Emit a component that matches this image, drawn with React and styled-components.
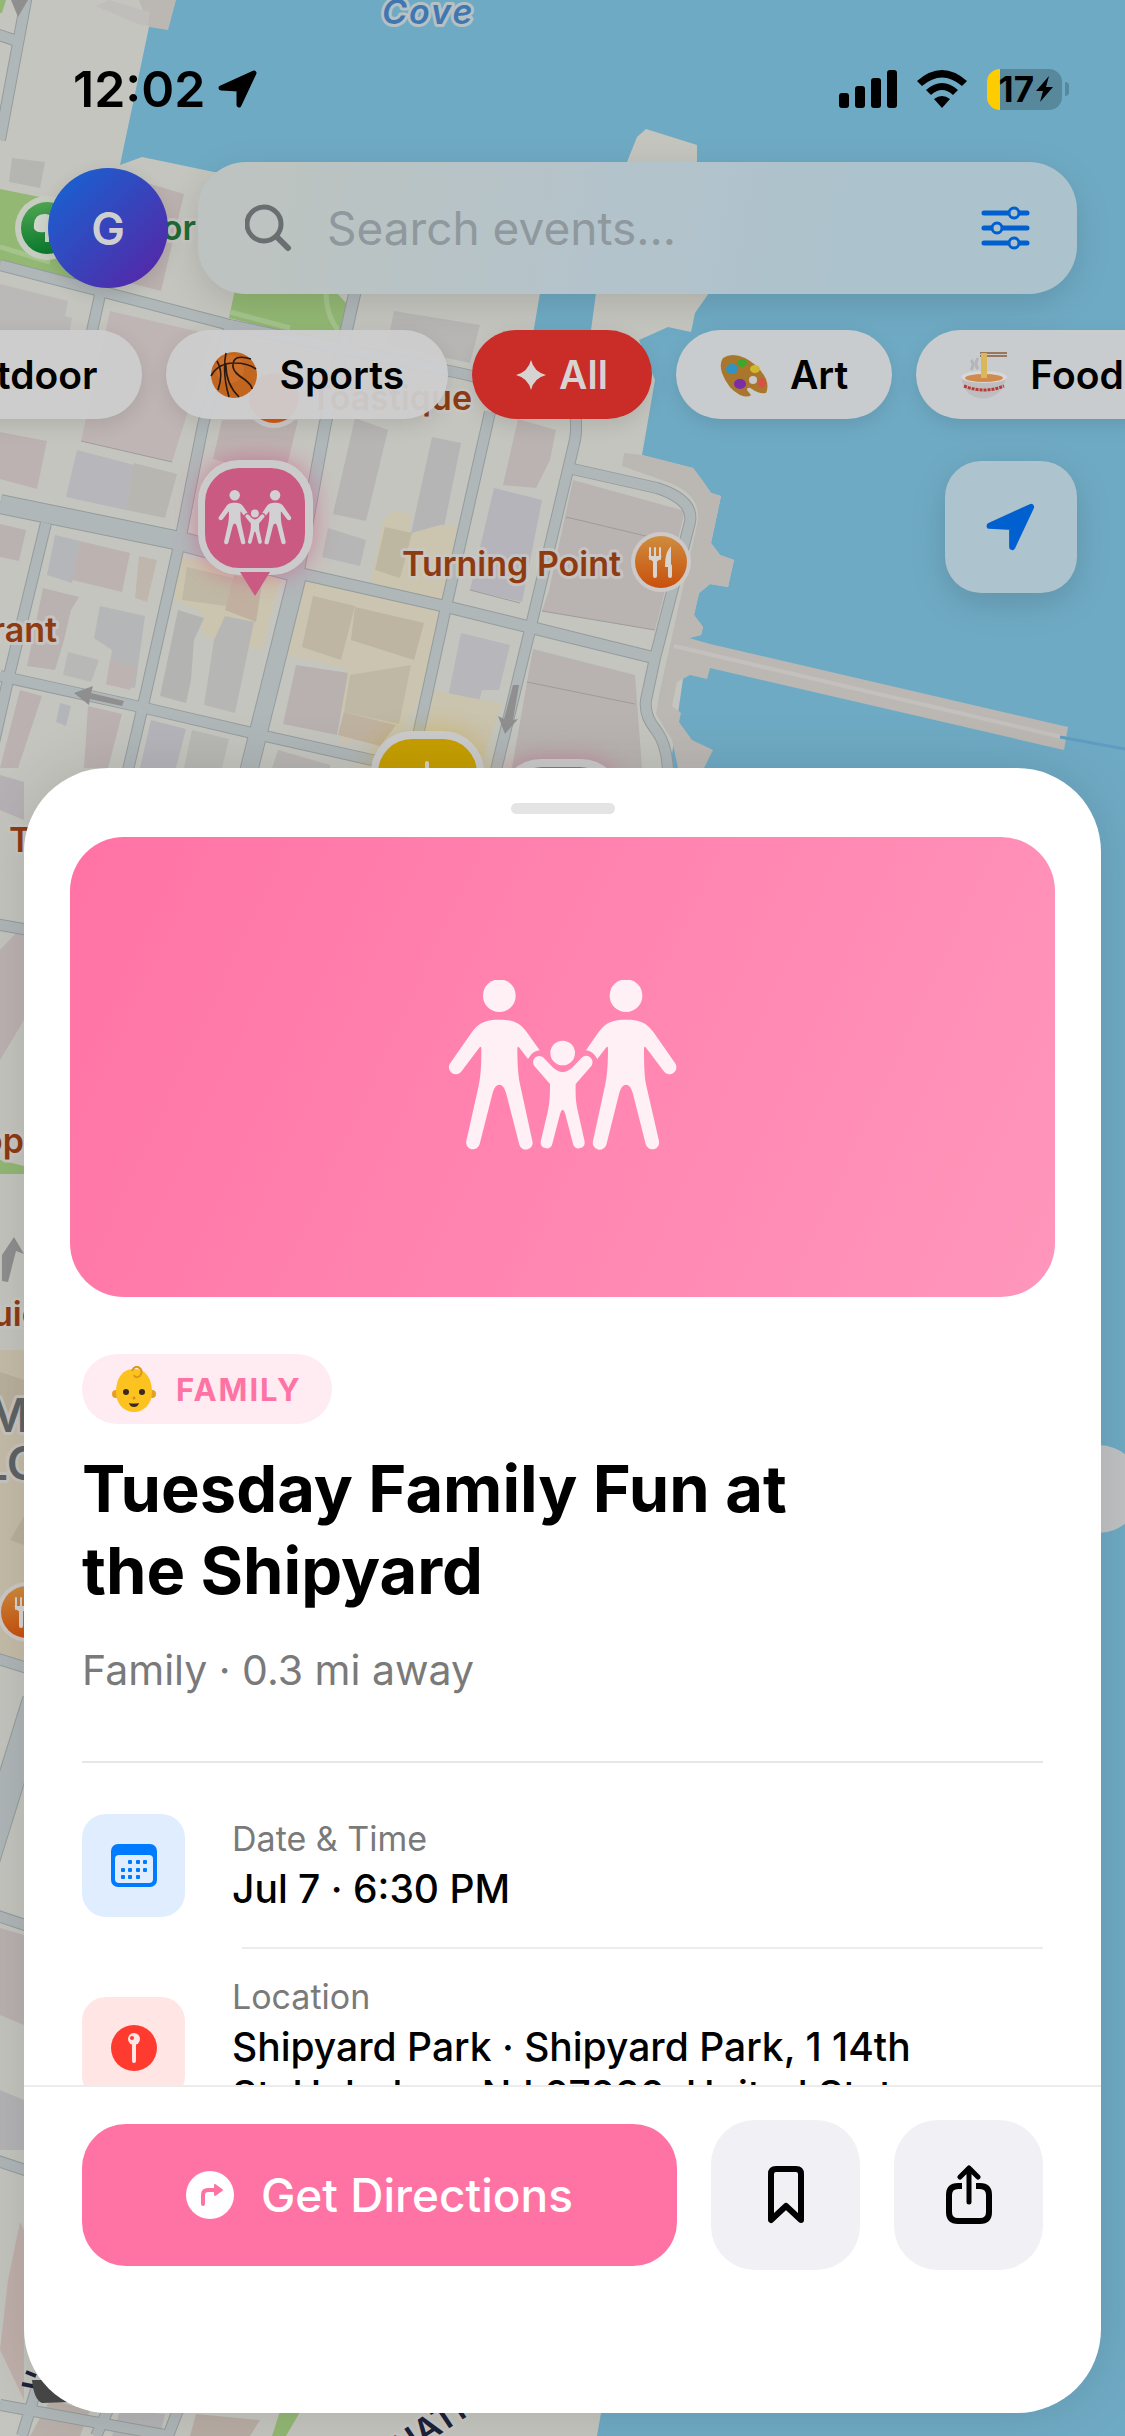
import React from "react";
import styled, { createGlobalStyle } from "styled-components";

const ink = "#000000";
const pink = "#ff73a4";
const blue = "#0060d0";

const GlobalStyle = createGlobalStyle`
  * {
    box-sizing: border-box;
  }

  body {
    margin: 0;
    background: #6faac4;
    font-family: Inter, "Liberation Sans", sans-serif;
    color: ${ink};
  }

  button,
  input {
    font: inherit;
    color: inherit;
    border: none;
    padding: 0;
    margin: 0;
  }
`;

//* Map data
const buildings = [
  { fill: "#c0bebb", points: "109,0 150,12 148,26 138,24 96,6" },
  { fill: "#b5b6b2", points: "12,158 45,162 40,188 9,182" },
  { fill: "#bbb9b8", points: "0,284 68,301 65,316 72,318 70,330 0,330" },
  { fill: "#bbb2b0", points: "144,182 184,194 161,291 110,278" },
  { fill: "#bfb5b5", points: "110,311 212,335 172,462 81,441" },
  { fill: "#bcb2b1", points: "0,432 47,441 37,489 0,479" },
  { fill: "#b6b6bb", points: "77,450 134,465 126,510 66,497" },
  { fill: "#b8b6b1", points: "134,463 177,474 165,518 126,510" },
  { fill: "#bcb2b0", points: "222,420 298,420 284,478 213,459" },
  { fill: "#b7b6b5", points: "394,311 480,325 470,363 387,345" },
  { fill: "#b6b5b4", points: "355,418 388,430 366,521 333,514" },
  { fill: "#b5b5b6", points: "432,437 461,443 441,542 411,533" },
  { fill: "#bab3b1", points: "518,419 556,430 550,460 536,488 503,485" },
  { fill: "#b6b6b6", points: "328,528 366,540 360,566 322,557" },
  { fill: "#b5b4ba", points: "494,488 542,500 522,602 470,590" },
  { fill: "#b9b4b2", points: "573,480 685,511 655,630 542,611 549,590" },
  { fill: "#bab2b1", points: "0,524 26,530 19,561 0,557" },
  { fill: "#b4b6ba", points: "55,535 80,541 72,583 47,575" },
  { fill: "#bcb3b1", points: "80,541 130,553 122,592 72,580" },
  { fill: "#bfb7ae", points: "139,556 157,560 147,602 135,598" },
  { fill: "#bab2b1", points: "43,588 79,597 71,610 64,640 55,670 27,666" },
  { fill: "#b5b6b8", points: "100,606 145,616 135,688 107,685 112,650 94,638" },
  { fill: "#b8b8b6", points: "68,652 99,660 91,682 63,675" },
  { fill: "#bdb3b1", points: "110,660 137,668 130,690 106,684" },
  { fill: "#cbc4ae", points: "181,557 281,578 262,650 203,636 202,612 174,600" },
  { fill: "#bfb8a4", points: "187,567 234,578 226,606 182,600" },
  { fill: "#c1b0a0", points: "234,575 262,583 256,622 225,610" },
  { fill: "#b3b4b2", points: "178,610 204,618 194,640 191,680 186,703 160,696" },
  { fill: "#b6b6b4", points: "225,616 254,622 235,713 204,705 214,640" },
  { fill: "#cbc4b0", points: "302,580 440,611 428,690 400,728 340,745 345,668 287,655" },
  { fill: "#beb5a3", points: "313,596 355,606 341,660 302,647" },
  { fill: "#bdb4a2", points: "355,607 424,623 414,660 351,640" },
  { fill: "#b9b1b0", points: "296,665 348,673 337,735 283,724" },
  { fill: "#beb8a5", points: "350,675 411,665 399,724 344,712" },
  { fill: "#c0b2a0", points: "344,712 396,725 380,746 338,735" },
  { fill: "#cbc4ae", points: "393,511 412,514 408,534 440,525 457,525 444,601 371,582 383,520" },
  { fill: "#bdb6a1", points: "385,527 412,533 400,578 375,570" },
  { fill: "#b6b6bb", points: "461,633 510,645 499,690 482,690 478,705 448,697" },
  { fill: "#cac3ad", points: "433,690 502,704 480,768 422,768" },
  { fill: "#b8b3b0", points: "533,649 635,675 642,768 512,768 527,682" },
  { fill: "#bab1b0", points: "20,690 42,696 18,768 0,768" },
  { fill: "#b4b5ba", points: "60,703 71,706 66,726 56,722" },
  { fill: "#bab1b0", points: "88,706 122,714 108,768 84,768" },
  { fill: "#b4b4ba", points: "151,720 186,729 176,768 140,768" },
  { fill: "#b8b8b5", points: "192,730 229,739 222,768 184,768" },
  { fill: "#b8b5b3", points: "278,750 330,765 330,768 272,768" },
  { fill: "#b6b1b4", points: "0,775 24,782 24,820 0,810" },
  { fill: "#bcb2b1", points: "0,950 24,925 24,1020 0,1060" },
  { fill: "#c5bda8", points: "0,1350 24,1350 24,1660 0,1660" },
  { fill: "#bab09d", points: "0,1372 24,1380 24,1420 0,1412" },
  { fill: "#bab09d", points: "10,1540 24,1516 24,1545" },
  { fill: "#b9b2b1", points: "0,1928 24,1935 24,2025 0,2015" },
  { fill: "#b4b4b6", points: "0,2090 24,2100 24,2150 0,2150" },
  { fill: "#c0b0ac", points: "20,2222 24,2230 24,2400 0,2350 8,2280" },
  { fill: "#bab0aa", points: "50,2400 90,2410 80,2436 30,2436" },
  { fill: "#b4b4b6", points: "120,2410 165,2414 160,2436 112,2436" },
  { fill: "#b9ada4", points: "196,2414 260,2420 250,2436 190,2436" },
];

const streets = [
  { width: 18, d: "M0 504L180 541L298 573" },
  { width: 11, d: "M298 573L448 607L655 658" },
  { width: 10, d: "M0 676L145 708L256 734L390 764" },
  { width: 10, d: "M0 265L100 291L230 325L459 373L575 400" },
  { width: 10, d: "M46 523L8 680L-10 760" },
  { width: 10, d: "M100 295L90 340" },
  { width: 10, d: "M230 325L203 425L180 541L142 710L128 770" },
  { width: 17, d: "M298 573L249 770" },
  { width: 11, d: "M355 292L325 425L298 573" },
  { width: 10, d: "M490 412L446 607L417 740" },
  { width: 10, d: "M573 400Q578 425 575 440L530 630L496 770" },
  { width: 10, d: "M568 468L657 488Q694 500 690 522L655 658L646 700Q644 716 656 730Q668 746 668 775" },
  { width: 10, d: "M27 -5L0 140M-4 34L20 42" },
  { width: 10, d: "M-5 924L40 932M-5 1658L40 1672M-5 1915L40 1930M-5 2160L40 2175" },
  { width: 26, d: "M-20 1880L36 1700" },
  { width: 10, d: "M0 2405L170 2436M36 2390L22 2436M108 2410L96 2436M178 2410L168 2436" },
];

function FamilyShape() {
  return (
    <>
      {[297, 677].map((x) => (
        <circle key={x} cx={x} cy="167" r="49" />
      ))}
      <path d="M297 239C335 239 358 246 379 276L418 331Q396 333 383 357L356 322Q351 317 351 326C351 380 354 410 361 442L396 603A20 20 0 0 1 357 614L317 458Q310 434 297 434Q284 434 277 458L238 612A20 20 0 0 1 198 603L234 442C241 410 243 380 243 326Q243 317 238 322L182 396A21 21 0 0 1 148 372L215 276C236 246 259 239 297 239Z" />
      <path d="M677 239C715 239 738 246 759 276L826 372A21 21 0 0 1 792 396L736 322Q731 317 731 326C731 380 732 410 739 442L776 603A20 20 0 0 1 736 612L697 458Q690 434 677 434Q664 434 657 458L618 614A20 20 0 0 1 578 603L613 442C620 410 623 380 623 326Q623 317 618 322L591 357Q578 333 557 331L595 276C616 246 639 239 677 239Z" />
      <circle cx="487" cy="339" r="37" />
      <path d="M430 353L457 382Q487 410 517 382L544 353A18 18 0 0 1 571 380L526 432C525 470 527 490 533 516L553 605A18 18 0 0 1 519 615L497 530Q492 509 487 509Q482 509 477 530L455 615A18 18 0 0 1 421 605L442 516C448 490 449 470 449 432L404 380A18 18 0 0 1 430 353Z" />
    </>
  );
}

function ForkPin({ x, y }) {
  return (
    <g transform={`translate(${x} ${y})`}>
      <circle r="30" fill="#cdc9c8" />
      <circle r="26" fill="url(#orange)" />
      <g fill="none" stroke="#d8d4d2" strokeLinecap="round">
        <path d="M-11 -14V-3M-6 -14V-3M-1 -14V-3" strokeWidth="2" />
        <path d="M-11 -5Q-6 3 -1 -5Z" fill="#d8d4d2" strokeWidth="2" />
        <path d="M-6 0V14" strokeWidth="4" />
        <path d="M9 -13Q5 -8 5 4H9Z" fill="#d8d4d2" strokeWidth="2" />
        <path d="M9 4V14" strokeWidth="4" />
      </g>
    </g>
  );
}

function CityMap() {
  return (
    <MapDrawing viewBox="0 0 1125 2436" preserveAspectRatio="xMinYMin slice" aria-hidden="true">
      <defs>
        <linearGradient id="orange" x2="0" y2="1">
          <stop stopColor="#cf8c3e" />
          <stop offset="1" stopColor="#c9500c" />
        </linearGradient>
        <linearGradient id="green" x2="0" y2="1">
          <stop stopColor="#4ea653" />
          <stop offset="1" stopColor="#0a7a2d" />
        </linearGradient>
        <filter id="glow" x="-50%" y="-50%" width="200%" height="200%">
          <feGaussianBlur stdDeviation="12" />
        </filter>
      </defs>
      <rect width="1125" height="2436" fill="#6faac4" />
      <path
        fill="#c5c5bf"
        d="M0 0H149V27L120 165L142 157L214 172L540 180V293L532 340L589 345L596 293L600 230L627 162L637 137L646 129L697 145V162L709 293L695 313L691 332L668 327L639 340L655 380L642 455L693 468L702 480L711 493L721 496L711 543L720 555L734 560L728 587L710 584L699 593L694 615L703 627L701 635L689 638L670 768L601 2413L597 2436H0Z"
      />
      <path
        fill="#bbb8b4"
        d="M139 0H176L168 30L149 27ZM624 453L642 455L693 468L702 480L711 493L721 496L711 543L720 555L734 560L728 587L710 584L699 593L694 615L703 627L701 635L689 638L710 644L1068 727L1064 750L710 668L707 679L690 675L677 682L672 706L681 713L679 722L692 740L713 750L704 768H678L672 740L656 714L660 690L698 520Q700 495 670 483L622 466Z"
      />
      <path d="M674 646L1062 737" stroke="#c3c0bd" strokeWidth="4" />
      <path d="M1060 737L1125 749" stroke="#5e9cc2" strokeWidth="3" />
      <path fill="#93b874" d="M0 189L85 206L90 284L0 262ZM237 280H325L347 304L340 345L229 318ZM0 0H6L2 13H0ZM282 2405H304L286 2436H272ZM0 1160L24 1166V1174H0Z" />
      <path d="M0 247L50 262M230 312L290 328M326 292Q326 315 338 330" fill="none" stroke="#a5c48c" strokeWidth="5" />
      {buildings.map((b) => (
        <polygon key={b.points} points={b.points} fill={b.fill} />
      ))}
      <g fill="none" strokeLinejoin="round">
        {streets.map((s) => (
          <path key={s.d} d={s.d} stroke="#949c9c" strokeWidth={s.width + 2} />
        ))}
        {streets.map((s) => (
          <path key={s.d} d={s.d} stroke="#b0b7b9" strokeWidth={s.width} />
        ))}
      </g>
      <g fill="none" stroke="#a09b99" strokeWidth="1">
        <path d="M566 517L650 537M527 682L635 704M470 590L520 603M81 441L172 462M542 611L655 630" />
      </g>
      <g fill="#8e8f8e">
        <path d="M74 693L93 686L91 693L124 701L122 706L90 699L89 705Z" />
        <path d="M513 685H519L513 720L518 719L505 734L498 716L504 719Z" />
        <path d="M11 0H28L18 17Z" />
        <path d="M2 1255L14 1237L24 1254L16 1251L8 1282L2 1281Z" />
      </g>

      <MapLabel x="382" y="24" $tone="#4177b0" $water>Cove</MapLabel>
      <circle cx="47" cy="228" r="32" fill="#c6cdc0" />
      <circle cx="47" cy="228" r="26" fill="url(#green)" />
      <path d="M45 242V232Q32 234 34 224Q35 213 46 214Q58 216 56 230L49 232V242Z" fill="#cfd6cc" />
      <MapLabel x="196" y="240" textAnchor="end" $tone="#1f6b33">Outdoor</MapLabel>
      <circle cx="274" cy="398" r="30" fill="#cdc9c8" />
      <circle cx="274" cy="398" r="25" fill="#cf5a16" />
      <MapLabel x="472" y="410" textAnchor="end">Toastique</MapLabel>
      <MapLabel x="621" y="576" textAnchor="end">Turning Point</MapLabel>
      <ForkPin x={661} y={562} />
      <MapLabel x="57" y="642" textAnchor="end">Restaurant</MapLabel>
      <MapLabel x="9" y="852">T</MapLabel>
      <MapLabel x="24" y="1153" textAnchor="end">Shop</MapLabel>
      <MapLabel x="-8" y="1326">uice</MapLabel>
      <MapLabel x="-13" y="1432" $tone="#5e6466" $size={46}>M</MapLabel>
      <MapLabel x="-18" y="1480" $tone="#5e6466" $size={46}>LO</MapLabel>
      <ForkPin x={27} y={1612} />
      <path d="M22 2384L52 2390M26 2372L36 2376" stroke="#1c2238" strokeWidth="4" />
      <path d="M32 2380Q34 2400 42 2403L70 2402L60 2380Z" fill="#484848" />
      <g transform="rotate(-34 420 2436)">
        <MapLabel x="392" y="2446" $tone="#1c2238">NATI</MapLabel>
      </g>
      <circle cx="1098" cy="1489" r="44" fill="#c1c2c4" />

      <rect x="198" y="460" width="115" height="115" rx="42" fill="#cf4f80" opacity="0.6" filter="url(#glow)" />
      <rect x="198" y="460" width="115" height="115" rx="41" fill="#cccbcb" />
      <rect x="205" y="468" width="100" height="100" rx="34" fill="#cb5a83" />
      <path d="M240 572H270L255 596Z" fill="#cb5a83" />
      <svg x="218" y="488" width="74" height="58" viewBox="140 112 696 520" fill="#d2d0d0">
        <FamilyShape />
      </svg>
      <rect x="371" y="731" width="113" height="113" rx="41" fill="#c9a000" opacity="0.35" filter="url(#glow)" />
      <rect x="371" y="731" width="113" height="113" rx="41" fill="#cccbcb" />
      <rect x="378" y="739" width="99" height="99" rx="34" fill="#c69f00" />
      <path d="M427 763V775" stroke="#d6d2c4" strokeWidth="4" strokeLinecap="round" />
      <rect x="500" y="759" width="122" height="113" rx="41" fill="#cf4f80" opacity="0.4" filter="url(#glow)" />
      <rect x="500" y="759" width="122" height="113" rx="41" fill="#cccbcb" />
      <rect x="508" y="767" width="106" height="98" rx="34" fill="#cb5a83" />
    </MapDrawing>
  );
}

//* Icons
function ArrowIcon({ size }) {
  return (
    <svg width={size} height={size} viewBox="0 0 40 40" fill="currentColor" stroke="currentColor" strokeWidth="5" strokeLinejoin="round">
      <path d="M3 19L36 4L21 36V20Z" />
    </svg>
  );
}

function BasketballIcon() {
  return (
    <EmojiDrawing viewBox="0 0 48 48">
      <circle cx="24" cy="24" r="23" fill="#c2651f" />
      <circle cx="20" cy="18" r="14" fill="#cf7530" opacity="0.6" />
      <g fill="none" stroke="#2b1a10" strokeWidth="1.6">
        <path d="M16 2Q12 22 19 46M7 10Q14 22 8 39M1 25Q8 12 24 12Q38 12 46 18M41 8Q22 2 23 16Q24 22 34 28Q42 34 42 38M16 12Q15 32 29 46" />
      </g>
    </EmojiDrawing>
  );
}

function PaletteIcon() {
  return (
    <EmojiDrawing viewBox="0 0 48 48">
      <path d="M3 7Q12 1 25 7Q39 14 46 28Q49 36 46 42Q38 43 32 38Q27 35 27 39L31 44Q28 47 20 44Q8 38 2 22Q-1 12 3 7Z" fill="#a9762d" />
      <ellipse cx="33" cy="29" rx="4" ry="4" fill="#c9c9cb" />
      <ellipse cx="12" cy="18" rx="6" ry="5" fill="#2f94c4" />
      <ellipse cx="22" cy="12" rx="5" ry="4" fill="#3da72d" />
      <ellipse cx="35" cy="18" rx="5" ry="4" fill="#d0b82e" />
      <ellipse cx="42" cy="32" rx="4" ry="5" fill="#d65344" />
      <ellipse cx="20" cy="33" rx="6" ry="5" fill="#7a2da6" />
    </EmojiDrawing>
  );
}

function NoodlesIcon() {
  return (
    <EmojiDrawing viewBox="0 0 48 48">
      <path d="M20 2H47M20 5H47" stroke="#8b5b35" strokeWidth="1.6" />
      <path d="M11 9Q15 13 11 19M18 7Q14 13 18 18" fill="none" stroke="#b4b5b8" strokeWidth="3" />
      <path d="M1 25Q3 42 15 46Q23 49 31 46Q44 42 46 25Z" fill="#bebec0" />
      <ellipse cx="24" cy="26" rx="23" ry="6" fill="#d8d8d9" />
      <ellipse cx="24" cy="27" rx="19" ry="4" fill="#cf8a4c" />
      <path d="M22 2V27M24 2V27M26 2V27" stroke="#d9b75a" strokeWidth="2" />
      <path d="M4 35Q24 43 44 35" fill="none" stroke="#b83a38" strokeWidth="3" strokeDasharray="3 1" />
    </EmojiDrawing>
  );
}

function TreeIcon() {
  return (
    <EmojiDrawing viewBox="0 0 48 48">
      <path d="M21 30H27V46H21Z" fill="#7a5230" />
      <circle cx="24" cy="19" r="17" fill="#3f8a3a" />
    </EmojiDrawing>
  );
}

function BabyIcon() {
  return (
    <svg width="44" height="46" viewBox="0 0 44 46">
      <circle cx="4" cy="28" r="4" fill="#e3a022" />
      <circle cx="40" cy="28" r="4" fill="#e3a022" />
      <path d="M22 3C36 3 40 16 40 26C40 38 32 46 22 46C12 46 4 38 4 26C4 16 8 3 22 3Z" fill="#fcc21f" />
      <path d="M20 5Q22 0 26 1Q32 4 28 10Q23 13 22 9" fill="none" stroke="#d9971a" strokeWidth="2" />
      <circle cx="14" cy="26" r="3" fill="#3b2a1c" />
      <circle cx="30" cy="26" r="3" fill="#3b2a1c" />
      <circle cx="22" cy="32" r="1.5" fill="#e08a1a" />
      <path d="M17 37Q22 38 27 37Q26 41 22 41Q18 41 17 37Z" fill="#3b2a1c" />
    </svg>
  );
}

function SparkIcon() {
  return (
    <svg width="30" height="30" viewBox="0 0 30 30" fill="currentColor">
      <path d="M15 0Q18 12 30 15Q18 18 15 30Q12 18 0 15Q12 12 15 0Z" />
    </svg>
  );
}

function CalendarIcon() {
  const dots = [[19, 20], [27, 20], [34, 20], [12, 28], [19, 28], [27, 28], [34, 28], [12, 35], [19, 35], [27, 35]];
  return (
    <svg width="46" height="43" viewBox="0 0 46 43">
      <rect width="46" height="43" rx="7" fill="#007aff" />
      <rect x="4" y="11" width="38" height="28" rx="4" fill="#e0edff" />
      {dots.map(([x, y]) => (
        <rect key={`${x}-${y}`} x={x - 2} y={y - 4} width="4" height="4" rx="1" fill="#007aff" />
      ))}
    </svg>
  );
}

function PinIcon() {
  return (
    <svg width="48" height="48" viewBox="0 0 48 48">
      <circle cx="24" cy="24" r="23" fill="#ff3b30" />
      <circle cx="24" cy="15" r="6" fill="#ffe6e5" />
      <path d="M24 18V37" stroke="#ffe6e5" strokeWidth="4" strokeLinecap="round" />
      <circle cx="22" cy="14" r="2" fill="#ff3b30" />
    </svg>
  );
}

const categories = [
  { name: "Outdoor", icon: <TreeIcon /> },
  { name: "Sports", icon: <BasketballIcon /> },
  { name: "All", icon: <SparkIcon /> },
  { name: "Art", icon: <PaletteIcon /> },
  { name: "Food", icon: <NoodlesIcon /> },
];

const details = [
  { label: "Date & Time", value: "Jul 7 · 6:30 PM", tint: "#e0edff", icon: <CalendarIcon /> },
  {
    label: "Location",
    value: "Shipyard Park · Shipyard Park, 1 14th St, Hoboken, NJ 07030, United States",
    tint: "#ffe6e5",
    icon: <PinIcon />,
  },
];

function StatusBar() {
  return (
    <Status>
      <Clock>
        12:02
        <ArrowIcon size={40} />
      </Clock>
      <Indicators>
        <svg width="58" height="38" viewBox="0 0 58 38">
          <rect y="23" width="10" height="15" rx="3" />
          <rect x="16" y="16" width="10" height="22" rx="3" />
          <rect x="32" y="8" width="10" height="30" rx="3" />
          <rect x="48" width="10" height="38" rx="3" />
        </svg>
        <svg width="52" height="38" viewBox="0 0 52 38">
          <path d="M1 11Q26 -11 51 11L46 16Q26 -1 6 16Z" />
          <path d="M10 20Q26 6 42 20L37 25Q26 15 15 25Z" />
          <path d="M18 29Q26 23 34 29L26 38Z" />
        </svg>
        <Battery>
          <BatteryBody>
            17
            <svg width="17" height="26" viewBox="0 0 17 26">
              <path d="M13 0L0 15H7L4 26L17 11H10Z" />
            </svg>
          </BatteryBody>
          <BatteryTip />
        </Battery>
      </Indicators>
    </Status>
  );
}

function CategoryRow() {
  const [selected, setSelected] = React.useState("All");
  const row = React.useRef(null);
  const active = React.useRef(null);

  // keep the selected chip in the middle of the row
  React.useLayoutEffect(() => {
    const chip = active.current;
    row.current.scrollLeft = chip.offsetLeft - (row.current.clientWidth - chip.offsetWidth) / 2;
  }, [selected]);

  return (
    <Chips ref={row}>
      {categories.map((c) => (
        <Chip
          key={c.name}
          type="button"
          ref={c.name === selected ? active : null}
          $active={c.name === selected}
          onClick={() => setSelected(c.name)}
        >
          {c.icon}
          {c.name}
        </Chip>
      ))}
    </Chips>
  );
}

function EventSheet() {
  return (
    <Sheet>
      <HandleArea>
        <Handle />
      </HandleArea>
      <SheetBody>
        <Hero>
          <svg width="232" height="174" viewBox="140 121 696 520" fill="#fff0f5">
            <FamilyShape />
          </svg>
        </Hero>
        <Content>
          <Badge>
            <BabyIcon />
            FAMILY
          </Badge>
          <Title>Tuesday Family Fun at the Shipyard</Title>
          <Subtitle>Family · 0.3 mi away</Subtitle>
          <Details>
            {details.map((d) => (
              <DetailRow key={d.label}>
                <IconTile $tint={d.tint}>{d.icon}</IconTile>
                <DetailText>
                  <DetailLabel>{d.label}</DetailLabel>
                  <DetailValue>{d.value}</DetailValue>
                </DetailText>
              </DetailRow>
            ))}
          </Details>
        </Content>
      </SheetBody>
      <Actions>
        <DirectionsButton type="button">
          <svg width="48" height="48" viewBox="0 0 48 48">
            <circle cx="24" cy="24" r="24" fill="#fff" />
            <path d="M17 33V24Q17 19 22 19H30" fill="none" stroke={pink} strokeWidth="4" strokeLinecap="round" />
            <path d="M29 14L36 19L29 24Z" fill={pink} stroke={pink} strokeWidth="2" strokeLinejoin="round" />
          </svg>
          Get Directions
        </DirectionsButton>
        <SquareButton type="button" aria-label="Save">
          <svg width="36" height="58" viewBox="0 0 36 58" fill="none" stroke={ink} strokeWidth="6" strokeLinejoin="round">
            <path d="M3 8Q3 3 8 3H28Q33 3 33 8V54L18 40L3 54Z" />
          </svg>
        </SquareButton>
        <SquareButton type="button" aria-label="Share">
          <svg width="48" height="60" viewBox="0 0 48 60" fill="none" stroke={ink} strokeLinecap="round" strokeLinejoin="round">
            <path d="M17 21H13Q4 21 4 30V47Q4 56 13 56H35Q44 56 44 47V30Q44 21 35 21H31" strokeWidth="6" strokeLinecap="butt" />
            <path d="M24 37V4M15 12L24 3L33 12" strokeWidth="5" />
          </svg>
        </SquareButton>
      </Actions>
    </Sheet>
  );
}

function App() {
  return (
    <Screen>
      <GlobalStyle />
      <CityMap />
      <StatusBar />
      <Header>
        <Avatar type="button">G</Avatar>
        <SearchBar>
          <svg width="48" height="48" viewBox="0 0 48 48" fill="none" stroke="#6a6e70" strokeWidth="5" strokeLinecap="round">
            <circle cx="19" cy="20" r="17" />
            <path d="M32 33L43 44" strokeWidth="6" />
          </svg>
          <SearchInput type="search" placeholder="Search events..." aria-label="Search events" />
          <FilterButton type="button" aria-label="Filters">
            <svg width="50" height="44" viewBox="0 0 50 44" fill="#aec3cc" stroke={blue} strokeWidth="5" strokeLinecap="round">
              <path d="M4 7H47M4 22H47M4 37H47" />
              <g strokeWidth="3">
                <circle cx="34" cy="7" r="5" />
                <circle cx="17" cy="22" r="5" />
                <circle cx="34" cy="37" r="5" />
              </g>
            </svg>
          </FilterButton>
        </SearchBar>
      </Header>
      <CategoryRow />
      <MapControls>
        <LocateButton type="button" aria-label="My location">
          <ArrowIcon size={50} />
        </LocateButton>
      </MapControls>
      <EventSheet />
    </Screen>
  );
}

export default App;

const Screen = styled.main`
  position: relative;
  display: flex;
  flex-direction: column;
  height: 100vh;
  overflow: hidden;
  isolation: isolate;
`;

const MapDrawing = styled.svg`
  position: absolute;
  inset: 0;
  width: 100%;
  height: 100%;
  z-index: -1;
`;

const MapLabel = styled.text`
  font-size: ${(p) => p.$size || 34}px;
  font-weight: 600;
  font-style: ${(p) => (p.$water ? "italic" : "normal")};
  letter-spacing: ${(p) => (p.$water ? "2px" : "normal")};
  fill: ${(p) => p.$tone || "#8e3b12"};
  stroke: #cbc8c5;
  stroke-width: 6px;
  stroke-opacity: 0.8;
  stroke-linejoin: round;
  paint-order: stroke;
`;

const EmojiDrawing = styled.svg`
  width: 48px;
  height: 48px;
`;

const Status = styled.div`
  display: flex;
  align-items: center;
  justify-content: space-between;
  flex: none;
  height: 162px;
  padding: 16px 56px 0 73px;
`;

const Clock = styled.div`
  display: flex;
  align-items: center;
  gap: 13px;
  font-size: 50px;
  font-weight: 600;
`;

const Indicators = styled.div`
  display: flex;
  align-items: center;
  gap: 19px;
`;

const Battery = styled.div`
  display: flex;
  align-items: center;
  gap: 3px;
`;

const BatteryBody = styled.div`
  display: flex;
  align-items: center;
  justify-content: flex-end;
  gap: 2px;
  width: 75px;
  height: 41px;
  padding-right: 9px;
  border-radius: 13px;
  background: linear-gradient(90deg, #ffcc00 13px, #58889c 13px);
  font-size: 35px;
  font-weight: 700;
`;

const BatteryTip = styled.div`
  width: 4px;
  height: 14px;
  border-radius: 0 4px 4px 0;
  background: #58889c;
`;

const Header = styled.header`
  display: flex;
  align-items: center;
  gap: 30px;
  flex: none;
  padding: 0 48px;
`;

const Avatar = styled.button`
  flex: none;
  width: 120px;
  height: 120px;
  border-radius: 50%;
  background: linear-gradient(135deg, #1a60cf 10%, #5428a8 90%);
  color: #cfcfd2;
  font-size: 45px;
  font-weight: 600;
  box-shadow: 0 6px 18px rgba(0, 0, 0, 0.12);
`;

const SearchBar = styled.div`
  display: flex;
  align-items: center;
  gap: 34px;
  flex: 1;
  min-width: 0;
  height: 132px;
  padding: 0 47px;
  border-radius: 48px;
  background: linear-gradient(100deg, #bcc3c1 10%, #b4c3cb 45%, #acc2cc 75%);
  box-shadow: 0 10px 36px rgba(0, 0, 0, 0.12);
`;

const SearchInput = styled.input`
  flex: 1;
  min-width: 0;
  height: 60px;
  background: transparent;
  font-size: 46px;
  outline: none;
  appearance: none;

  &::placeholder {
    color: #8f989d;
    opacity: 1;
  }
`;

const FilterButton = styled.button`
  display: flex;
  background: transparent;
`;

const Chips = styled.nav`
  position: relative;
  display: flex;
  gap: 24px;
  flex: none;
  padding: 36px 48px;
  overflow-x: auto;
  scrollbar-width: none;
`;

const Chip = styled.button`
  display: flex;
  align-items: center;
  flex: none;
  gap: ${(p) => (p.$active ? 13 : 22)}px;
  height: 89px;
  padding: 0 44px;
  border-radius: 45px;
  background: ${(p) => (p.$active ? "#ca2c27" : "rgba(205, 205, 207, 0.95)")};
  color: ${(p) => (p.$active ? "#d8d3d3" : ink)};
  font-size: 39px;
  font-weight: 600;
  box-shadow: 0 6px 20px rgba(0, 0, 0, 0.1);
`;

const MapControls = styled.div`
  display: flex;
  justify-content: flex-end;
  flex: none;
  padding: 6px 48px 175px;
`;

const LocateButton = styled.button`
  display: flex;
  align-items: center;
  justify-content: center;
  width: 132px;
  height: 132px;
  border-radius: 36px;
  background: #adc3cd;
  color: ${blue};
  box-shadow: 0 10px 36px rgba(0, 0, 0, 0.14);
`;

const Sheet = styled.section`
  display: flex;
  flex-direction: column;
  flex: 1;
  min-height: 0;
  margin: 0 24px 23px;
  border-radius: 84px;
  background: #ffffff;
  overflow: hidden;
  box-shadow: 0 0 60px rgba(0, 0, 0, 0.12);
`;

const HandleArea = styled.div`
  display: flex;
  justify-content: center;
  flex: none;
  padding: 35px 0 23px;
`;

const Handle = styled.div`
  width: 104px;
  height: 11px;
  border-radius: 6px;
  background: #e4e4e4;
`;

const SheetBody = styled.div`
  flex: 1;
  min-height: 0;
  overflow: hidden;
`;

const Hero = styled.div`
  display: flex;
  align-items: center;
  justify-content: center;
  height: 460px;
  margin: 0 46px;
  border-radius: 54px;
  background: linear-gradient(115deg, #ff73a4, #ff96bb);
`;

const Content = styled.div`
  display: flex;
  flex-direction: column;
  align-items: flex-start;
  padding: 57px 58px 0;
`;

const Badge = styled.div`
  display: flex;
  align-items: center;
  gap: 20px;
  height: 70px;
  padding: 0 30px;
  border-radius: 35px;
  background: #ffebf2;
  color: ${pink};
  font-size: 31px;
  font-weight: 700;
  letter-spacing: 2px;
`;

const Title = styled.h1`
  max-width: 760px;
  margin: 24px 0 33px;
  font-size: 65px;
  font-weight: 700;
  line-height: 82px;
`;

const Subtitle = styled.p`
  margin: 0;
  color: #7a7a7a;
  font-size: 41px;
  line-height: 50px;
`;

const Details = styled.div`
  width: 100%;
  margin-top: 66px;
  padding-top: 21px;
  border-top: 2px solid #e6e6e6;
`;

const DetailRow = styled.div`
  display: flex;
  align-items: center;
  gap: 47px;
  padding: 30px 0;

  & + & {
    background: linear-gradient(#ececec, #ececec) 160px 0 / 100% 2px no-repeat;
  }
`;

const IconTile = styled.div`
  display: flex;
  align-items: center;
  justify-content: center;
  flex: none;
  width: 103px;
  height: 103px;
  border-radius: 24px;
  background: ${(p) => p.$tint};
`;

const DetailText = styled.div`
  display: flex;
  flex-direction: column;
  gap: 6px;
  max-width: 720px;
`;

const DetailLabel = styled.div`
  color: #7a7a7a;
  font-size: 34px;
  line-height: 40px;
`;

const DetailValue = styled.div`
  font-size: 39px;
  font-weight: 500;
  line-height: 48px;
`;

const Actions = styled.footer`
  display: flex;
  align-items: center;
  gap: 34px;
  flex: none;
  padding: 33px 58px 143px;
  border-top: 2px solid #ececec;
`;

const DirectionsButton = styled.button`
  display: flex;
  align-items: center;
  justify-content: center;
  gap: 27px;
  flex: 1;
  height: 142px;
  border-radius: 44px;
  background: ${pink};
  color: #ffffff;
  font-size: 46px;
  font-weight: 500;
`;

const SquareButton = styled.button`
  display: flex;
  align-items: center;
  justify-content: center;
  flex: none;
  width: 149px;
  height: 150px;
  border-radius: 44px;
  background: #f1f0f5;
`;
